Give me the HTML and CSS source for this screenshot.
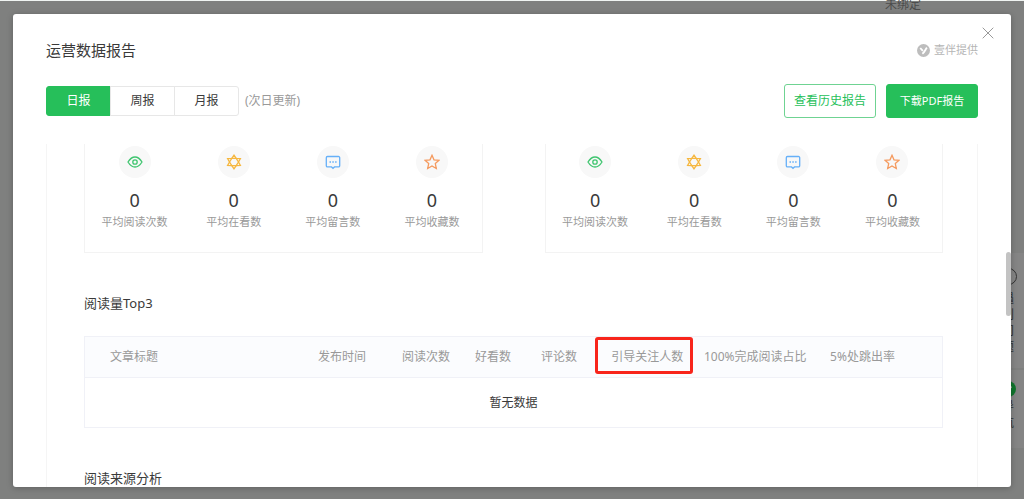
FILE: index.html
```html
<!DOCTYPE html>
<html lang="zh-CN">
<head>
<meta charset="utf-8">
<title>运营数据报告</title>
<link rel="stylesheet" href="styles.css">
</head>
<body>
<svg class="sprite" aria-hidden="true">
  <symbol id="eye" viewBox="0 0 16 16"><path d="M1 8C3.2 4.400 5.400 3 8 3s4.800 1.400 7 5c-2.200 3.600-4.400 5-7 5S3.200 11.600 1 8z"/><circle cx="8" cy="8" r="2.200"/></symbol>
  <symbol id="flower" viewBox="0 0 16 16"><path d="M8 1.200l2.200 3.100 4.200.2L12.500 8l1.900 3.500-4.200.2L8 14.800l-2.200-3.100-4.200-.2L3.500 8 1.600 4.500l4.200-.2z"/><path d="M5.800 4.300h4.400L12.500 8l-2.300 3.700H5.800L3.500 8z"/></symbol>
  <symbol id="chat" viewBox="0 0 16 16"><path d="M2.500 2.500h11a1.200 1.200 0 0 1 1.200 1.200v8a1.200 1.200 0 0 1-1.200 1.200h-4L8 14.300l-1.500-1.400h-4a1.200 1.200 0 0 1-1.200-1.200v-8a1.200 1.200 0 0 1 1.200-1.200z"/><path d="M4.500 8H6M7.300 8h1.500M10.100 8h1.500"/></symbol>
  <symbol id="star" viewBox="0 0 16 16"><path d="M8 1.300l2 4.500 5 .5-3.700 3.300 1 4.900L8 12l-4.300 2.500 1-4.900L1 6.300l5-.5z"/></symbol>
</svg>

<div class="page" aria-hidden="true">
  <span class="page-status">未绑定</span>
  <div class="side">
    <div class="side-card side-help"><span class="ring"></span><span class="side-text">遇到问题</span></div>
    <div class="side-card side-nav"><svg class="badge" viewBox="0 0 16 16"><circle cx="8" cy="8" r="8"/><path d="M4.500 7l3 2.500 4-4"/></svg><span class="side-text">导航</span></div>
  </div>
</div>

<div class="overlay">
  <main class="modal" role="dialog" aria-labelledby="title">
    <button class="close" aria-label="关闭"><svg viewBox="0 0 12 12"><path d="M.7.7l10.600 10.600M11.300.7L.7 11.300"/></svg></button>
    <header class="head">
      <h1 class="title" id="title">运营数据报告</h1>
      <span class="provider"><svg viewBox="0 0 14 14"><circle cx="7" cy="7" r="7"/><path d="M3.500 4.300l2.800 3.200M10.700 4C9 5.800 8.500 8.500 5.800 10.500"/></svg>壹伴提供</span>
    </header>
    <div class="toolbar">
      <div class="tabs">
        <button class="tab active">日报</button><button class="tab">周报</button><button class="tab">月报</button>
      </div>
      <span class="note">(次日更新)</span>
      <div class="actions">
        <button class="btn">查看历史报告</button>
        <button class="btn primary">下载PDF报告</button>
      </div>
    </div>
    <div class="report">
      <div class="cards">
        <section class="card">
          <div class="stat"><span class="disc green"><svg><use href="#eye"/></svg></span><b>0</b><span class="label">平均阅读次数</span></div>
          <div class="stat"><span class="disc yellow"><svg><use href="#flower"/></svg></span><b>0</b><span class="label">平均在看数</span></div>
          <div class="stat"><span class="disc blue"><svg><use href="#chat"/></svg></span><b>0</b><span class="label">平均留言数</span></div>
          <div class="stat"><span class="disc orange"><svg><use href="#star"/></svg></span><b>0</b><span class="label">平均收藏数</span></div>
        </section>
        <section class="card">
          <div class="stat"><span class="disc green"><svg><use href="#eye"/></svg></span><b>0</b><span class="label">平均阅读次数</span></div>
          <div class="stat"><span class="disc yellow"><svg><use href="#flower"/></svg></span><b>0</b><span class="label">平均在看数</span></div>
          <div class="stat"><span class="disc blue"><svg><use href="#chat"/></svg></span><b>0</b><span class="label">平均留言数</span></div>
          <div class="stat"><span class="disc orange"><svg><use href="#star"/></svg></span><b>0</b><span class="label">平均收藏数</span></div>
        </section>
      </div>
      <h2 class="heading">阅读量Top3</h2>
      <table class="top">
        <thead>
          <tr><th class="c-title">文章标题</th><th class="c-time">发布时间</th><th class="c-reads">阅读次数</th><th class="c-likes">好看数</th><th class="c-comments">评论数</th><th class="c-follow"><span class="marked">引导关注人数</span></th><th class="c-done">100%完成阅读占比</th><th>5%处跳出率</th></tr>
        </thead>
        <tbody><tr><td colspan="8">暂无数据</td></tr></tbody>
      </table>
      <h2 class="heading">阅读来源分析</h2>
    </div>
    <span class="thumb"></span>
  </main>
</div>
</body>
</html>
```
FILE: styles.css
```css
* { box-sizing: border-box; }

body {
  margin: 0;
  height: 100vh;
  overflow: hidden;
  background: #7f807f;
  border-top: 1px solid #f0f4f2;
  font: 12px/16px "Noto Sans", "Noto Sans CJK SC", sans-serif;
  color: #3a3a3a;
}

button { font: inherit; padding: 0; cursor: pointer; }
svg { fill: none; stroke: currentColor; }
.sprite { display: none; }

/* Dimmed page behind the dialog */
.page-status { position: absolute; top: -3px; right: 103px; color: #4c4c4c; }
.side { position: absolute; top: 253px; right: 0; width: 32px; }
.side-card {
  display: flex;
  flex-direction: column;
  align-items: center;
  background: #858585;
  color: #333;
  margin-bottom: 2px;
}
.side-help { height: 115px; padding-top: 15px; gap: 6px; }
.side-nav { height: 78px; padding-top: 11px; gap: 2px; }
.side-text { width: 12px; }
.ring { width: 17px; height: 17px; border: 1px solid #333; border-radius: 50%; }
.badge { width: 16px; height: 16px; fill: #0f752c; stroke: none; flex: none; }
.badge path { fill: none; stroke: #999; stroke-width: 2; }

.overlay { position: relative; height: 100%; padding: 13px 13px 12px; }
.modal {
  position: relative;
  display: flex;
  flex-direction: column;
  height: 100%;
  padding: 23px 33px 0 33px;
  background: #fff;
  border-radius: 3px;
  box-shadow: 0 1px 6px rgba(0, 0, 0, 0.25);
}
.close {
  position: absolute;
  top: 13px;
  right: 17px;
  width: 12px;
  height: 12px;
  border: 0;
  background: none;
  color: #999;
}
.close svg { display: block; width: 12px; height: 12px; }

.head { display: flex; justify-content: space-between; align-items: center; }
.title { margin: 0; font-size: 15px; line-height: 26px; font-weight: 400; }
.provider { display: flex; align-items: center; gap: 4px; font-size: 11px; line-height: 18px; color: #b5b5b5; }
.provider svg { width: 13px; height: 13px; }
.provider circle { fill: #bdbdbd; stroke: none; }
.provider path { stroke: #fff; stroke-width: 2; }

.toolbar { display: flex; align-items: center; margin: 21px 0 26px; }
.tabs { display: flex; }
.tab {
  width: 65px;
  height: 30px;
  margin-right: -1px;
  border: 1px solid #e7e7e7;
  background: #fff;
  color: #3a3a3a;
}
.tab:first-child { border-radius: 3px 0 0 3px; }
.tab:last-child { border-radius: 0 3px 3px 0; }
.tab.active { background: #26bf5a; border-color: #26bf5a; color: #fff; }
.note { margin-left: 7px; color: #999; }
.actions { display: flex; gap: 10px; margin-left: auto; }
.btn {
  width: 92px;
  height: 34px;
  border: 1px solid #6fd392;
  border-radius: 3px;
  background: #fff;
  color: #26bf5a;
}
.btn.primary { background: #26bf5a; border-color: #26bf5a; color: #fff; font-size: 11px; }

.report {
  flex: 1;
  min-height: 0;
  overflow: hidden;
  padding: 0 34px 0 37px;
  border: solid #f5f5f5;
  border-width: 0 1px;
}
.cards { display: grid; grid-template-columns: 1fr 1fr; gap: 62px; }
.card {
  display: grid;
  grid-template-columns: repeat(4, 1fr);
  padding: 2px 0 22px;
  border: solid #f3f3f3;
  border-width: 0 1px 1px;
}
.stat { display: flex; flex-direction: column; align-items: center; }
.disc {
  display: grid;
  place-items: center;
  width: 32px;
  height: 32px;
  border-radius: 50%;
  background: #f8f8f8;
}
.disc svg { width: 16px; height: 16px; stroke-width: 1.3; }
.green { color: #3fc56f; }
.yellow { color: #f6b73f; }
.blue { color: #66b0f8; }
.orange { color: #f59a5e; }
.stat b { margin-top: 11px; font-size: 18px; line-height: 22px; font-weight: 400; }
.label { margin-top: 3px; font-size: 11px; color: #999; }

.heading { margin: 0; padding: 40px 0 23px; font-size: 13px; line-height: 20px; font-weight: 400; }

.top {
  width: 100%;
  table-layout: fixed;
  border-collapse: collapse;
  border: 1px solid #f0f1f7;
}
.top th {
  height: 41px;
  padding: 0;
  border-bottom: 1px solid #f0f1f7;
  background: #fbfcfe;
  color: #999;
  font-weight: 400;
  text-align: left;
  white-space: nowrap;
}
.top td { height: 50px; padding: 0; text-align: center; }
.top .c-title { width: 27.2%; padding-left: 25px; }
.c-time { width: 9.8%; }
.c-reads { width: 8.5%; }
.c-likes { width: 7.7%; }
.c-comments { width: 8.2%; }
.c-follow { width: 10.8%; }
.c-done { width: 14.7%; }
.marked { position: relative; }
.marked::after {
  content: "";
  position: absolute;
  inset: -11px -10px -9px -16px;
  border: 3px solid #f8251b;
  border-radius: 3px;
}

.thumb {
  position: absolute;
  top: 238px;
  right: 0;
  width: 5px;
  height: 64px;
  border-radius: 3px;
  background: #c3c3c3;
}
```
